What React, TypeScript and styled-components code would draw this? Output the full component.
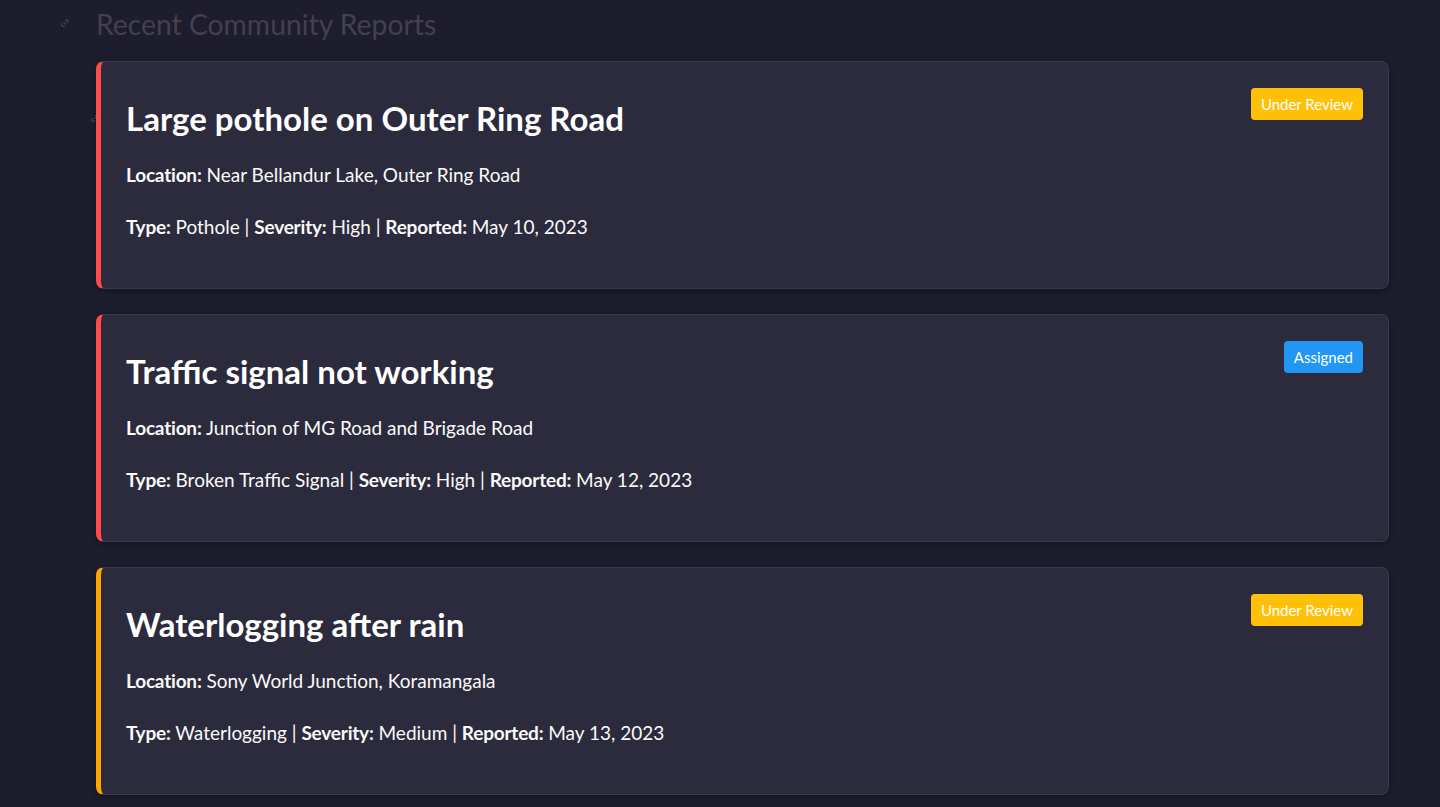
import React from "react";
import styled, { createGlobalStyle } from "styled-components";

const Global = createGlobalStyle`
  html, body { margin: 0; padding: 0; background: #1e1d2d; }
  body { font-family: "Lato", "Noto Sans", sans-serif; color: #fafafa; }
  * { box-sizing: border-box; }
`;

const Page = styled.div`
  width: 1440px;
  height: 807px;
  overflow: hidden;
  padding: 4px 51px 0 96px;
  display: flex;
  flex-direction: column;
  gap: 17px;
`;

const Heading = styled.h2`
  position: relative;
  margin: 0;
  font-size: 28.3px;
  line-height: 40px;
  font-weight: 400;
  color: #42414d;
`;

const Anchor = styled.span<{ $left: number; $top: number }>`
  position: absolute;
  left: ${(p) => p.$left}px;
  top: ${(p) => p.$top}px;
  width: 10px;
  height: 10px;
  display: flex;
  opacity: 0.35;
`;

const List = styled.div`
  display: flex;
  flex-direction: column;
  gap: 25px;
`;

const Card = styled.div<{ $accent: string }>`
  height: 228px;
  background: #2c2b3d;
  border: 1px solid #3a394d;
  border-left: 5px solid ${(p) => p.$accent};
  border-radius: 8px;
  padding: 26px 25px 25px;
  box-shadow: 0 2px 6px rgba(0, 0, 0, 0.35);
  display: flex;
  flex-direction: column;
`;

const TopRow = styled.div`
  display: flex;
  justify-content: space-between;
  align-items: flex-start;
`;

const Title = styled.h3`
  position: relative;
  margin: 9px 0 0;
  font-size: 33px;
  line-height: 42px;
  font-weight: 700;
  color: #ffffff;
`;

const Badge = styled.span<{ $bg: string }>`
  height: 32px;
  padding: 0 10px;
  border-radius: 4px;
  background: ${(p) => p.$bg};
  color: #ffffff;
  font-size: 15px;
  line-height: 32px;
  white-space: nowrap;
`;

const Line = styled.p<{ $mt: number }>`
  margin: ${(p) => p.$mt}px 0 0;
  font-size: 19px;
  line-height: 30px;
  color: #fafafa;
`;

const B = styled.strong`
  font-weight: 700;
  letter-spacing: -0.2px;
`;

const LinkIcon = () => (
  <svg width="10" height="10" viewBox="0 0 10 10" fill="none" stroke="#9a9aa8" strokeWidth="1">
    <path d="M4 6 L6 4" />
    <path d="M5 3 L6 2 A1.4 1.4 0 0 1 8 4 L7 5" />
    <path d="M5 7 L4 8 A1.4 1.4 0 0 1 2 6 L3 5" />
  </svg>
);

type Report = {
  title: string;
  location: string;
  type: string;
  severity: string;
  date: string;
  status: string;
  accent: string;
  badge: string;
};

const reports: Report[] = [
  {
    title: "Large pothole on Outer Ring Road",
    location: "Near Bellandur Lake, Outer Ring Road",
    type: "Pothole",
    severity: "High",
    date: "May 10, 2023",
    status: "Under Review",
    accent: "#ff4b4b",
    badge: "#ffc107",
  },
  {
    title: "Traffic signal not working",
    location: "Junction of MG Road and Brigade Road",
    type: "Broken Traffic Signal",
    severity: "High",
    date: "May 12, 2023",
    status: "Assigned",
    accent: "#ff4b4b",
    badge: "#2196f3",
  },
  {
    title: "Waterlogging after rain",
    location: "Sony World Junction, Koramangala",
    type: "Waterlogging",
    severity: "Medium",
    date: "May 13, 2023",
    status: "Under Review",
    accent: "#ffa500",
    badge: "#ffc107",
  },
];

export default function App() {
  return (
    <>
      <Global />
      <Page>
        <Heading>
          <Anchor $left={-36} $top={14}>
            <LinkIcon />
          </Anchor>
          Recent Community Reports
        </Heading>
        <List>
          {reports.map((r, i) => (
            <Card key={i} $accent={r.accent}>
              <TopRow>
                <Title>
                  {i === 0 && (
                    <Anchor $left={-36} $top={16}>
                      <LinkIcon />
                    </Anchor>
                  )}
                  {r.title}
                </Title>
                <Badge $bg={r.badge}>{r.status}</Badge>
              </TopRow>
              <Line $mt={21}>
                <B>Location:</B> {r.location}
              </Line>
              <Line $mt={22}>
                <B>Type:</B> {r.type} | <B>Severity:</B> {r.severity} | <B>Reported:</B> {r.date}
              </Line>
            </Card>
          ))}
        </List>
      </Page>
    </>
  );
}
